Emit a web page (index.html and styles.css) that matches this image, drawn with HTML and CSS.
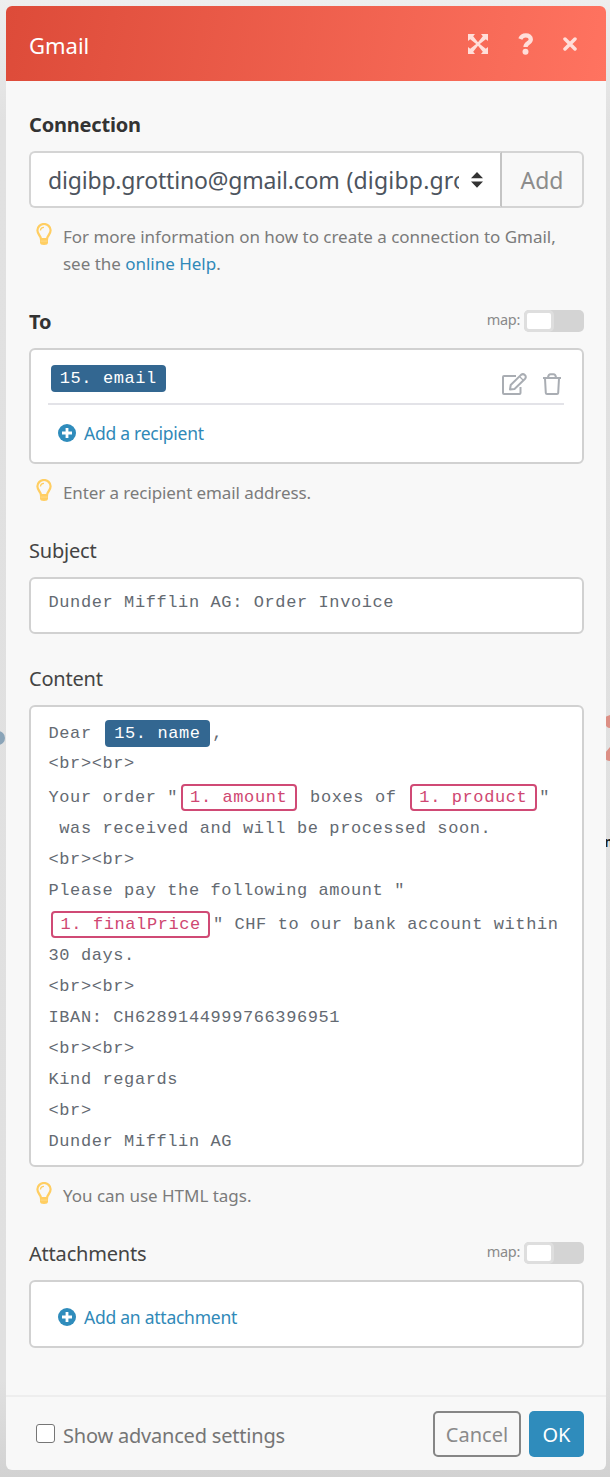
FILE: index.html
```html
<!DOCTYPE html>
<html lang="en">
<head>
<meta charset="utf-8">
<title>Gmail</title>
<link rel="stylesheet" href="styles.css">
</head>
<body>
<svg class="defs" width="0" height="0" aria-hidden="true">
  <symbol id="bulb" viewBox="0 0 16 22">
    <path d="M5 16.2C5 12.8 1.4 11.500 1.400 7.300a6.600 6.300 0 0 1 13.200 0C14.600 11.500 11 12.800 11 16.200Z" fill="none" stroke="#ffce62" stroke-width="2.200"/>
    <path d="M4.500 7.500C4.500 5.500 6 4.300 8 4.300" fill="none" stroke="#ffce62" stroke-width="1.300"/>
    <path d="M4 16h8v3.500q0 2.500-4 2.500t-4-2.500Z" fill="#ffce62"/>
    <path d="M4.500 18.100h7" stroke="#ffdf98" stroke-width=".7"/>
  </symbol>
  <symbol id="plus" viewBox="0 0 18 18">
    <circle cx="9" cy="9" r="9" fill="#2f8cbc"/>
    <path d="M9 4v10M4 9h10" stroke="#fff" stroke-width="2.800"/>
  </symbol>
</svg>
<div class="canvas-node"></div>
<svg class="canvas-module" viewBox="0 0 5 48"><path d="M0 2L5 0V13Q1 13 0 8ZM5 32V46Q1 46 0 43V38Z" fill="#dd8f85"/></svg>
<div class="canvas-label">m</div>

<main class="dialog">
  <header class="head">
    <h1 class="title">Gmail</h1>
    <div class="tools">
      <svg width="20" height="20" viewBox="0 0 20 20" fill="#ffded9"><path d="M0 0h7L5.200 2.200 10 8.200 14.800 2.200 13 0h7v7l-2.200-1.800L11.800 10l6 4.800L20 13v7h-7l1.800-2.200L10 11.800l-4.800 6L7 20H0v-7l2.200 1.800L8.200 10 2.200 5.200 0 7Z"/></svg>
      <svg width="16" height="22" viewBox="0 0 16 22"><path d="M2.300 6C3.300 3.700 5 2.300 7.800 2.300c3 0 5 1.500 5 3.900 0 4-5.300 3.500-5.300 7.800" fill="none" stroke="#ffded9" stroke-width="4.300"/><circle cx="7.500" cy="18.800" r="3" fill="#ffded9"/></svg>
      <svg width="14" height="14" viewBox="0 0 14 14"><path d="M2 2l10 10M12 2L2 12" stroke="#ffded9" stroke-width="3.500" stroke-linecap="round"/></svg>
    </div>
  </header>

  <section class="body">
    <div class="label-row"><label class="label strong">Connection</label></div>
    <div class="connection">
      <div class="select">
        <span class="select-text">digibp.grottino@gmail.com <span class="account">(digibp.gro</span></span>
        <svg width="12" height="16" viewBox="0 0 12 16" fill="#333"><path d="M6 0l6 6.200H0ZM0 9.500h12L6 15.700Z"/></svg>
      </div>
      <button class="add">Add</button>
    </div>
    <div class="hint"><svg class="bulb"><use href="#bulb"/></svg><p class="hint-text">For more information on how to create a connection to Gmail,<br>see the <a class="link">online Help</a>.</p></div>

    <div class="label-row"><label class="label strong">To</label><div class="map"><span class="map-text">map:</span><span class="toggle"></span></div></div>
    <div class="box recipients">
      <div class="recipient">
        <span class="chip blue">15. email</span>
        <div class="actions">
          <svg width="25" height="22" viewBox="0 0 25 22" fill="none" stroke="#a9adb3" stroke-width="2" stroke-linejoin="round"><path d="M14 3H2Q1 3 1 4V20Q1 21 2 21H17.500Q18.500 21 18.500 20V14"/><path d="M8 16.500L8.700 12 19 1.900Q21 .3 22.800 2t.3 3.700L12.500 16Z"/><path d="M17.500 3.500l4 4" stroke-width="1.300"/></svg>
          <svg width="20" height="22" viewBox="0 0 20 22" fill="none" stroke="#a9adb3" stroke-width="2"><path d="M1 5h18M3 5.500L3.800 20Q3.900 21 5 21H15Q16.100 21 16.200 20L17 5.500M6 4.500Q6.500 1.300 8.500 1.300h3Q13.500 1.300 14 4.500"/></svg>
        </div>
      </div>
      <a class="add-item"><svg class="plus"><use href="#plus"/></svg><span>Add a recipient</span></a>
    </div>
    <div class="hint"><svg class="bulb"><use href="#bulb"/></svg><p class="hint-text short">Enter a recipient email address.</p></div>

    <div class="label-row"><label class="label">Subject</label></div>
    <div class="box subject">Dunder Mifflin AG: Order Invoice</div>

    <div class="label-row after-box"><label class="label">Content</label></div>
    <div class="box content">
      <div class="line tagged first">Dear <span class="chip blue">15. name</span>,</div>
      <div class="line">&lt;br&gt;&lt;br&gt;</div>
      <div class="line tagged">Your order "<span class="chip pink">1. amount</span> boxes of <span class="chip pink">1. product</span>"</div>
      <div class="line"> was received and will be processed soon.</div>
      <div class="line">&lt;br&gt;&lt;br&gt;</div>
      <div class="line">Please pay the following amount "</div>
      <div class="line tagged"><span class="chip pink">1. finalPrice</span>" CHF to our bank account within</div>
      <div class="line">30 days.</div>
      <div class="line">&lt;br&gt;&lt;br&gt;</div>
      <div class="line">IBAN: CH6289144999766396951</div>
      <div class="line">&lt;br&gt;&lt;br&gt;</div>
      <div class="line">Kind regards</div>
      <div class="line">&lt;br&gt;</div>
      <div class="line">Dunder Mifflin AG</div>
    </div>
    <div class="hint"><svg class="bulb"><use href="#bulb"/></svg><p class="hint-text">You can use HTML tags.</p></div>

    <div class="label-row"><label class="label">Attachments</label><div class="map"><span class="map-text">map:</span><span class="toggle"></span></div></div>
    <div class="box attachments"><a class="add-item"><svg class="plus"><use href="#plus"/></svg><span>Add an attachment</span></a></div>
  </section>

  <footer class="foot">
    <span class="check"></span><span class="advanced">Show advanced settings</span>
    <button class="btn cancel">Cancel</button>
    <button class="btn ok">OK</button>
  </footer>
</main>
</body>
</html>
```
FILE: styles.css
```css
* { box-sizing: border-box; }
body {
  margin: 0;
  padding: 6px 4px 7px 6px;
  height: 1477px;
  overflow: hidden;
  position: relative;
  background: linear-gradient(#eeeeee, #e1e1e1 120px, #e0e0e0 1380px, #d2d2d2 1477px);
  font-family: "Noto Sans", "Open Sans", sans-serif;
}
.defs { position: absolute; }
h1, p { margin: 0; font-weight: 400; }
button { font-family: inherit; padding: 0; }

.canvas-node { position: absolute; left: -9px; top: 731px; width: 14px; height: 14px; border-radius: 50%; background: #8aa4b8; }
.canvas-module { position: absolute; left: 605px; top: 715px; width: 5px; height: 48px; }
.canvas-label { position: absolute; left: 604px; top: 831px; font: 700 15px/20px "Noto Sans", sans-serif; color: #222; }

.dialog {
  position: relative;
  width: 600px;
  height: 1464px;
  display: flex;
  flex-direction: column;
  border-radius: 6px;
  overflow: hidden;
  background: #f8f8f8;
}
.head {
  height: 75px;
  flex: none;
  display: flex;
  align-items: center;
  justify-content: space-between;
  padding: 0 29px 0 23px;
  background: linear-gradient(100deg, #dd4b39, #ff7360);
}
.title { font-size: 22px; letter-spacing: 0; line-height: 30px; color: #fff; padding-top: 2px; }
.tools { display: flex; align-items: center; gap: 29.500px; padding-top: 1px; }

.body { flex: 1; padding: 29px 22px 0 23px; }
.label-row { display: flex; justify-content: space-between; align-items: center; height: 28px; margin-bottom: 13px; }
.label { font-size: 20px; letter-spacing: -.2px; line-height: 28px; color: #444; padding-top: 1px; }
.strong { font-weight: 700; color: #333; }
.after-box { margin-top: 30px; }
.map { display: flex; align-items: center; gap: 4px; font-size: 14.500px; letter-spacing: -.3px; color: #8a8a8a; margin-top: -1px; }
.map-text { margin-top: -3px; }
.toggle { width: 60px; height: 22px; border-radius: 5px; background: #d4d4d4; display: flex; }
.toggle::before { content: ""; box-sizing: border-box; width: 30px; height: 22px; border: 3px solid #dedede; border-radius: 5px; background: #fff; }

.connection { display: flex; height: 57px; }
.select {
  width: 473px;
  display: flex;
  align-items: center;
  gap: 12px;
  padding: 0 17px 0 17px;
  border: 2px solid #d4d4d4;
  border-right-color: #c4c4c4;
  border-radius: 6px 0 0 6px;
  background: #fff;
}
.select svg { flex: none; }
.select-text { flex: 1; overflow: hidden; white-space: nowrap; font-size: 23px; letter-spacing: -.18px; color: #4d545e; padding-top: 1px; }
.account { letter-spacing: .2px; margin-left: 1px; }
.add { width: 82px; border: 2px solid #d4d4d4; border-left: 0; border-radius: 0 6px 6px 0; background: #f8f8f8; font-size: 23px; color: #8c8c8c; padding-top: 1px; }

.hint { display: flex; margin: 15px 0 30px; gap: 11px; padding-left: 7px; }
.bulb { width: 16px; height: 22px; flex: none; }
.hint-text { font-size: 17px; line-height: 27px; letter-spacing: -.02px; color: #7b7b7b; white-space: nowrap; }
.short { letter-spacing: -.1px; }
.link, .add-item { color: #3089b8; }

.box { border: 2px solid #d1d1d1; border-radius: 6px; background: #fff; }
.recipients { height: 116px; padding: 0 18px 0 17px; }
.recipient { height: 55px; border-bottom: 2px solid #e3e3e8; display: flex; justify-content: space-between; padding-top: 15px; }
.actions { display: flex; gap: 15px; padding: 8px 2px 0 0; }
.add-item { display: flex; align-items: center; gap: 8px; font-size: 17.500px; letter-spacing: -.25px; line-height: 28px; padding-left: 10px; margin-top: 14px; }
.plus { width: 18px; height: 18px; }

.chip, .subject, .line { font-family: "Liberation Mono", monospace; font-size: 17px; letter-spacing: .6px; white-space: pre; }
.chip { display: inline-block; height: 27px; line-height: 28px; margin: 0 2.700px; padding: 0 9px; border-radius: 4px; vertical-align: top; }
.blue { background: #336791; color: #fff; }
.pink { border: 2px solid #d04a75; background: #fff; color: #cf4772; line-height: 24px; padding: 0 7.300px; }
.subject { height: 57px; padding: 8px 17.500px; line-height: 31px; color: #646a72; }
.content { height: 462px; padding: 8px 0 0 17.500px; color: #646a72; }
.line { height: 31px; line-height: 31px; display: flex; align-items: center; }
.tagged { height: 34px; padding-top: 3px; }
.first { height: 33px; }
.attachments { height: 68px; padding: 7px 17px; }

.foot { height: 75px; flex: none; border-top: 2px solid #eee; display: flex; align-items: center; padding: 1px 22px 0 30px; }
.check { width: 19px; height: 19px; border: 1.500px solid #767676; border-radius: 3px; background: #fff; margin-top: -1px; }
.advanced { font-size: 20px; letter-spacing: -.2px; color: #757575; margin: 0 auto 0 8px; padding-top: 2px; }
.btn { height: 46px; border-radius: 5px; font-size: 20px; padding-top: 1px; }
.cancel { width: 88px; border: 2px solid #868686; background: #f8f8f8; color: #8a8a8a; margin-right: 8px; }
.ok { width: 55px; border: 0; background: #2f8cbc; color: #fff; }
```
